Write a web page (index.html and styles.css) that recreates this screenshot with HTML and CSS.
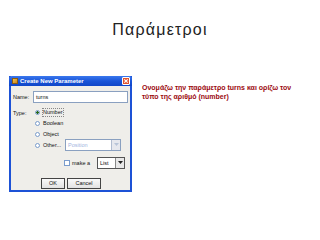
FILE: index.html
```html
<!DOCTYPE html>
<html>
<head>
<meta charset="utf-8">
<link rel="stylesheet" href="styles.css">
</head>
<body>
<h1 class="title">Παράμετροι</h1>
<div class="content">
  <div class="dialog">
    <div class="titlebar">
      <span class="app-icon"></span>
      <span class="title-text">Create New Parameter</span>
      <span class="close">
        <svg width="7" height="7" viewBox="0 0 7 7"><path d="M1.5 1.5 L5.5 5.5 M5.5 1.5 L1.5 5.5" stroke="#fff" stroke-width="1.3"/></svg>
      </span>
    </div>
    <div class="dbody">
      <div class="row name-row">
        <span class="label">Name:</span>
        <span class="field">turns</span>
      </div>
      <div class="type-row">
        <span class="label">Type:</span>
        <div class="options">
          <div class="opt"><span class="radio checked"></span><span class="optlabel focus">Number</span></div>
          <div class="opt"><span class="radio"></span><span class="optlabel">Boolean</span></div>
          <div class="opt"><span class="radio"></span><span class="optlabel">Object</span></div>
          <div class="opt"><span class="radio"></span><span class="optlabel">Other...</span>
            <span class="combo disabled"><span class="ctext">Position</span><span class="cbtn"><svg width="5" height="4" viewBox="0 0 5 4"><path d="M0 0 H5 L2.5 3 Z" fill="#b8c4d8"/></svg></span></span>
          </div>
        </div>
      </div>
      <div class="make-row">
        <span class="check"></span><span class="optlabel">make a</span>
        <span class="combo list"><span class="ctext">List</span><span class="cbtn dark"><svg width="5" height="4" viewBox="0 0 5 4"><path d="M0 0 H5 L2.5 3 Z" fill="#222"/></svg></span></span>
      </div>
      <div class="buttons">
        <span class="btn ok">OK</span>
        <span class="btn cancel">Cancel</span>
      </div>
    </div>
  </div>
  <p class="note">Ονομάζω την παράμετρο turns και ορίζω τον<br>τύπο της αριθμό (number)</p>
</div>
</body>
</html>
```
FILE: styles.css
```css
html, body {
  margin: 0;
  padding: 0;
  background: #fff;
  width: 320px;
  height: 240px;
  overflow: hidden;
  font-family: "Liberation Sans", Arial, sans-serif;
}
.title {
  margin: 0;
  padding-top: 20px;
  height: 56px;
  box-sizing: border-box;
  text-align: center;
  font-size: 16px;
  font-weight: normal;
  letter-spacing: 1.2px;
  color: #222;
  line-height: 20px;
}
.content {
  display: flex;
  align-items: flex-start;
  padding-left: 9px;
}
.dialog {
  width: 123px;
  height: 116px;
  box-sizing: border-box;
  background: #efeeea;
  border: 2px solid #1d52d6;
  border-top: none;
  margin-top: 20px;
  display: flex;
  flex-direction: column;
}
.titlebar {
  height: 10px;
  margin: 0 -2px;
  background: linear-gradient(#3a78ee, #1a55d8 50%, #1046c8);
  border-radius: 3px 3px 0 0;
  display: flex;
  align-items: center;
  padding: 0 2px 0 3px;
}
.app-icon {
  width: 6px;
  height: 6px;
  background: linear-gradient(135deg, #f3c44a, #c88420);
  border: 1px solid #8a5a10;
  box-sizing: border-box;
}
.title-text {
  color: #fff;
  font-size: 6px;
  font-weight: bold;
  margin-left: 2px;
  flex: 1;
  line-height: 10px;
}
.close {
  width: 8px;
  height: 8px;
  background: #e2542e;
  border: 1px solid #fff;
  box-sizing: border-box;
  border-radius: 1px;
  display: flex;
  align-items: center;
  justify-content: center;
}
.close svg { width: 6px; height: 6px; }
.dbody {
  flex: 1;
  padding: 5px 2px 0 2px;
  font-size: 5.5px;
  color: #111;
}
.row {
  display: flex;
  align-items: center;
}
.label {
  width: 20px;
  font-size: 5.5px;
}
.field {
  flex: 1;
  height: 12px;
  background: #fff;
  border: 1px solid #8aa0c0;
  box-sizing: border-box;
  font-size: 5.5px;
  line-height: 10px;
  padding-left: 2px;
}
.type-row {
  display: flex;
  align-items: flex-start;
  margin-top: 6px;
}
.type-row .label { padding-top: 1px; }
.options {
  display: flex;
  flex-direction: column;
  gap: 4px;
  margin-left: 2px;
}
.opt {
  display: flex;
  align-items: center;
  height: 7px;
}
.radio {
  width: 5px;
  height: 5px;
  border-radius: 50%;
  background: #fff;
  border: 1px solid #7a9ccc;
  box-sizing: border-box;
  margin-right: 3px;
}
.radio.checked {
  background: radial-gradient(circle, #2a6a1a 0 1.2px, #fff 1.5px);
}
.optlabel {
  font-size: 5.5px;
  line-height: 7px;
}
.optlabel.focus {
  outline: 1px dotted #888;
}
.combo {
  display: flex;
  height: 12px;
  box-sizing: border-box;
  border: 1px solid #8aa0c0;
  background: #fff;
}
.combo.disabled {
  width: 56px;
  margin-left: 4px;
  margin-top: -2px;
}
.combo.disabled .ctext { color: #9fb4e0; }
.ctext {
  flex: 1;
  font-size: 5.5px;
  line-height: 10px;
  padding-left: 2px;
}
.cbtn {
  width: 8px;
  background: #e6e8ee;
  border-left: 1px solid #b0bcd0;
  display: flex;
  align-items: center;
  justify-content: center;
}
.cbtn.dark {
  background: #e8e8e8;
  border-left: 1px solid #888;
}
.make-row {
  display: flex;
  align-items: center;
  margin-top: 8px;
  padding-left: 51px;
}
.check {
  width: 6px;
  height: 6px;
  border: 1px solid #7a9ccc;
  background: #fff;
  box-sizing: border-box;
  margin-right: 2px;
}
.combo.list {
  width: 28px;
  margin-left: 7px;
  border-color: #555;
}
.buttons {
  display: flex;
  gap: 2px;
  padding-left: 28px;
  margin-top: 9px;
}
.btn {
  height: 11px;
  box-sizing: border-box;
  border: 1px solid #444;
  background: linear-gradient(#fafafa, #e2e2e2);
  font-size: 5.5px;
  line-height: 9px;
  text-align: center;
}
.btn.ok { width: 24px; }
.btn.cancel { width: 34px; }
.note {
  margin: 27px 0 0 10px;
  font-size: 7px;
  font-weight: bold;
  color: #9b0a10;
  line-height: 9px;
}
```
